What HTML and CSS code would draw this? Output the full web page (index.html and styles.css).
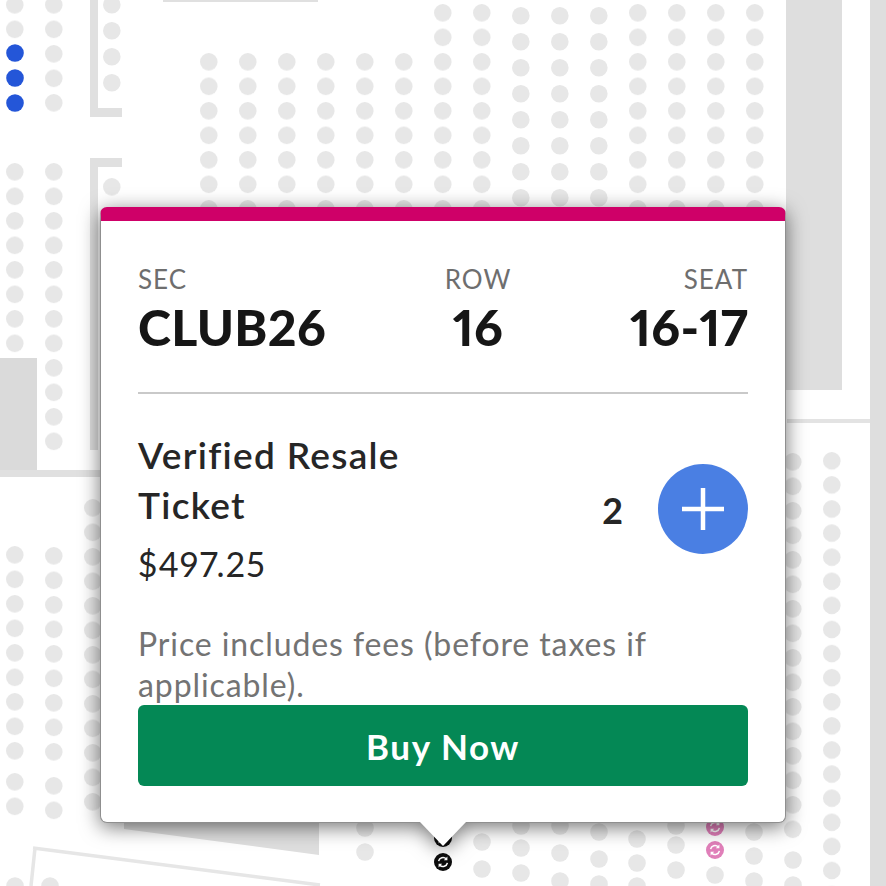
FILE: index.html
```html
<!DOCTYPE html>
<html lang="en">
<head>
    <meta charset="UTF-8">
    <title>Ticket details</title>
    <link rel="stylesheet" href="styles.css">
</head>
<body>
    <div class="map">
        <svg class="seatmap" width="886" height="886" viewBox="0 0 886 886">
            <defs>
                <pattern id="seats" width="39" height="24.5" patternUnits="userSpaceOnUse">
                    <circle cx="8.8" cy="8.8" r="8.8" fill="#e7e7e7"/>
                </pattern>
                <pattern id="seats-tall" width="39" height="26" patternUnits="userSpaceOnUse">
                    <circle cx="8.8" cy="8.8" r="8.8" fill="#e7e7e7"/>
                </pattern>
                <pattern id="seats-tight" width="39" height="24.1" patternUnits="userSpaceOnUse">
                    <circle cx="8.8" cy="8.8" r="8.8" fill="#e7e7e7"/>
                </pattern>
                <symbol id="resale" viewBox="0 0 18 18">
                    <circle cx="9" cy="9" r="9" fill="currentColor"/>
                    <path d="M4.6 8.2a4.5 4.5 0 0 1 7.6-2.4M13.4 9.8a4.5 4.5 0 0 1-7.6 2.4" fill="none" stroke="#fff" stroke-width="1.5"/>
                    <path d="M13.4 3.6v3.6H9.8zM4.6 14.4v-3.6h3.6z" fill="#fff"/>
                </symbol>
            </defs>

            <!-- section walls -->
            <rect x="786" y="0" width="56" height="390" fill="#dedede"/>
            <rect x="870" y="0" width="16" height="886" fill="#dedede"/>
            <rect x="787" y="419" width="83" height="4" fill="#e3e3e3"/>
            <rect x="0" y="358" width="37" height="112" fill="#dadada"/>
            <rect x="0" y="470" width="100" height="7" fill="#e0e0e0"/>
            <path d="M90 0h8v108h24v9H90z" fill="#e0e0e0"/>
            <path d="M90 158h32v9H98v283h-8z" fill="#e0e0e0"/>
            <rect x="163" y="0" width="155" height="2" fill="#e0e0e0"/>
            <path d="M124 823h195v32L124 829z" fill="#dedede"/>
            <path d="M33 848l287 37M35 848l-4 38" fill="none" stroke="#e6e6e6" stroke-width="3.5"/>

            <!-- left columns -->
            <rect transform="translate(6,-4)" width="39" height="49" fill="url(#seats)"/>
            <rect transform="translate(45,-4)" width="39" height="122" fill="url(#seats)"/>
            <rect transform="translate(103,-4)" width="39" height="104" fill="url(#seats-tall)"/>
            <rect transform="translate(6,163)" width="39" height="196" fill="url(#seats)"/>
            <rect transform="translate(45,163)" width="39" height="294" fill="url(#seats)"/>
            <rect transform="translate(103,178)" width="20" height="18" fill="url(#seats)"/>
            <rect transform="translate(6,546)" width="39" height="220" fill="url(#seats)"/>
            <rect transform="translate(45,547)" width="39" height="220" fill="url(#seats)"/>
            <rect transform="translate(6,773)" width="39" height="49" fill="url(#seats)"/>
            <rect transform="translate(45,777)" width="39" height="49" fill="url(#seats)"/>
            <rect transform="translate(84,499)" width="39" height="318" fill="url(#seats)"/>
            <circle cx="15" cy="53" r="8.8" fill="#2456d8"/>
            <circle cx="15" cy="78" r="8.8" fill="#2456d8"/>
            <circle cx="15" cy="103" r="8.8" fill="#2456d8"/>
            <circle cx="15" cy="886" r="8.8" fill="#e7e7e7"/>
            <circle cx="50" cy="886" r="8.8" fill="#e7e7e7"/>

            <!-- middle block -->
            <rect transform="translate(200,53)" width="234" height="171.5" fill="url(#seats)"/>
            <rect transform="translate(434,4)" width="78" height="220" fill="url(#seats)"/>
            <rect transform="translate(512,7)" width="117" height="208" fill="url(#seats-tall)"/>
            <rect transform="translate(629,4)" width="156" height="220" fill="url(#seats)"/>

            <!-- right columns -->
            <rect transform="translate(784,453)" width="39" height="390" fill="url(#seats)"/>
            <rect transform="translate(823,452)" width="39" height="434" fill="url(#seats-tight)"/>

            <!-- seats under the popup -->
            <circle cx="365" cy="828" r="8.8" fill="#e7e7e7"/>
            <circle cx="365" cy="852" r="8.8" fill="#e7e7e7"/>
            <circle cx="482" cy="842" r="8.8" fill="#e7e7e7"/>
            <circle cx="482" cy="869" r="8.8" fill="#e7e7e7"/>
            <circle cx="521" cy="826" r="8.8" fill="#e7e7e7"/>
            <circle cx="521" cy="848" r="8.8" fill="#e7e7e7"/>
            <circle cx="521" cy="873" r="8.8" fill="#e7e7e7"/>
            <circle cx="560" cy="826" r="8.8" fill="#e7e7e7"/>
            <circle cx="560" cy="853" r="8.8" fill="#e7e7e7"/>
            <circle cx="560" cy="881" r="8.8" fill="#e7e7e7"/>
            <circle cx="599" cy="832" r="8.8" fill="#e7e7e7"/>
            <circle cx="599" cy="859" r="8.8" fill="#e7e7e7"/>
            <circle cx="599" cy="884" r="8.8" fill="#e7e7e7"/>
            <circle cx="637" cy="839" r="8.8" fill="#e7e7e7"/>
            <circle cx="637" cy="863" r="8.8" fill="#e7e7e7"/>
            <circle cx="637" cy="886" r="8.8" fill="#e7e7e7"/>
            <circle cx="676" cy="826" r="8.8" fill="#e7e7e7"/>
            <circle cx="676" cy="845" r="8.8" fill="#e7e7e7"/>
            <circle cx="676" cy="870" r="8.8" fill="#e7e7e7"/>
            <circle cx="715" cy="875" r="8.8" fill="#e7e7e7"/>
            <circle cx="754" cy="832" r="8.8" fill="#e7e7e7"/>
            <circle cx="754" cy="856" r="8.8" fill="#e7e7e7"/>
            <circle cx="754" cy="881" r="8.8" fill="#e7e7e7"/>
            <circle cx="793" cy="860" r="8.8" fill="#e7e7e7"/>
            <circle cx="793" cy="885" r="8.8" fill="#e7e7e7"/>

            <!-- resale seats -->
            <use href="#resale" class="seat-pink" x="706" y="818" width="18" height="18"/>
            <use href="#resale" class="seat-pink" x="706" y="841" width="18" height="18"/>
            <use href="#resale" class="seat-black" x="434" y="829" width="18" height="18"/>
            <use href="#resale" class="seat-black" x="434" y="853" width="18" height="18"/>
        </svg>

        <div class="popup">
            <div class="popup-body">
                <div class="seat-info">
                    <div class="seat-col">
                        <span class="seat-label">SEC</span>
                        <span class="seat-value">CLUB26</span>
                    </div>
                    <div class="seat-col seat-col-mid">
                        <span class="seat-label">ROW</span>
                        <span class="seat-value">16</span>
                    </div>
                    <div class="seat-col seat-col-end">
                        <span class="seat-label">SEAT</span>
                        <span class="seat-value">16-17</span>
                    </div>
                </div>

                <div class="ticket">
                    <div class="ticket-text">
                        <div class="ticket-name">Verified Resale Ticket</div>
                        <div class="ticket-price">$497.25</div>
                    </div>
                    <div class="qty">
                        <span class="qty-num">2</span>
                        <button class="qty-add" type="button" aria-label="Add ticket">
                            <svg width="42" height="42" viewBox="0 0 42 42"><path d="M21 0v42M0 21h42" stroke="#fff" stroke-width="4.5"/></svg>
                        </button>
                    </div>
                </div>

                <p class="fees">Price includes fees (before taxes if applicable).</p>
                <button class="buy" type="button">Buy Now</button>
            </div>
            <div class="popup-tip"></div>
        </div>
    </div>
</body>
</html>
```

FILE: styles.css
```css
html, body { margin: 0; padding: 0; background: #fff; }
body { font-family: Lato, "Open Sans", sans-serif; color: #262626; font-feature-settings: "pnum"; }

.map { position: relative; width: 886px; height: 886px; overflow: hidden; }
.seatmap { position: absolute; left: 0; top: 0; }
.seat-pink { color: #e07fb9; }
.seat-black { color: #0d0d0d; }

.popup { position: absolute; left: 100px; top: 207px; width: 686px; filter: drop-shadow(0 4px 10px rgba(0, 0, 0, 0.55)); }
.popup-body { box-sizing: border-box; height: 616px; padding: 43px 37px 0; background: #fff; border: 1px solid #8f8f8f; border-top: 14px solid #cf0068; border-radius: 7px; }
.popup-tip { position: absolute; left: 320px; top: 615px; width: 46px; height: 24px; background: #fff; clip-path: polygon(0 0, 100% 0, 50% 100%); }

.seat-info { display: flex; justify-content: space-between; height: 128px; border-bottom: 2px solid #c9c9c9; }
.seat-col { display: flex; flex-direction: column; }
.seat-col-mid { align-items: center; }
.seat-col-end { align-items: flex-end; }
.seat-label { font-size: 26px; line-height: 30px; letter-spacing: 1px; color: #6e6e6e; }
.seat-value { margin-top: 2px; font-size: 50px; line-height: 62px; font-weight: 900; letter-spacing: 0.3px; color: #161616; }

.ticket { display: flex; align-items: center; justify-content: space-between; margin-top: 36px; }
.ticket-text { width: 300px; }
.ticket-name { font-size: 37px; line-height: 50px; font-weight: 600; letter-spacing: 1.3px; }
.ticket-price { margin-top: 9px; font-size: 34px; line-height: 50px; letter-spacing: 1.3px; }
.qty { display: flex; align-items: center; gap: 35px; margin-bottom: 2px; }
.qty-num { font-size: 36px; font-weight: 700; margin-top: 2px; }
.qty-add { display: flex; align-items: center; justify-content: center; width: 90px; height: 90px; padding: 0; border: none; border-radius: 50%; background: #4a7fe3; }

.fees { height: 82px; margin: 34px 0 0; font-size: 32px; line-height: 41px; letter-spacing: 0.9px; color: #737373; }
.buy { display: block; width: 610px; height: 81px; padding: 0; border: none; border-radius: 6px; background: #048855; color: #fff; font-family: inherit; font-size: 35px; font-weight: 700; letter-spacing: 1.6px; }
```
